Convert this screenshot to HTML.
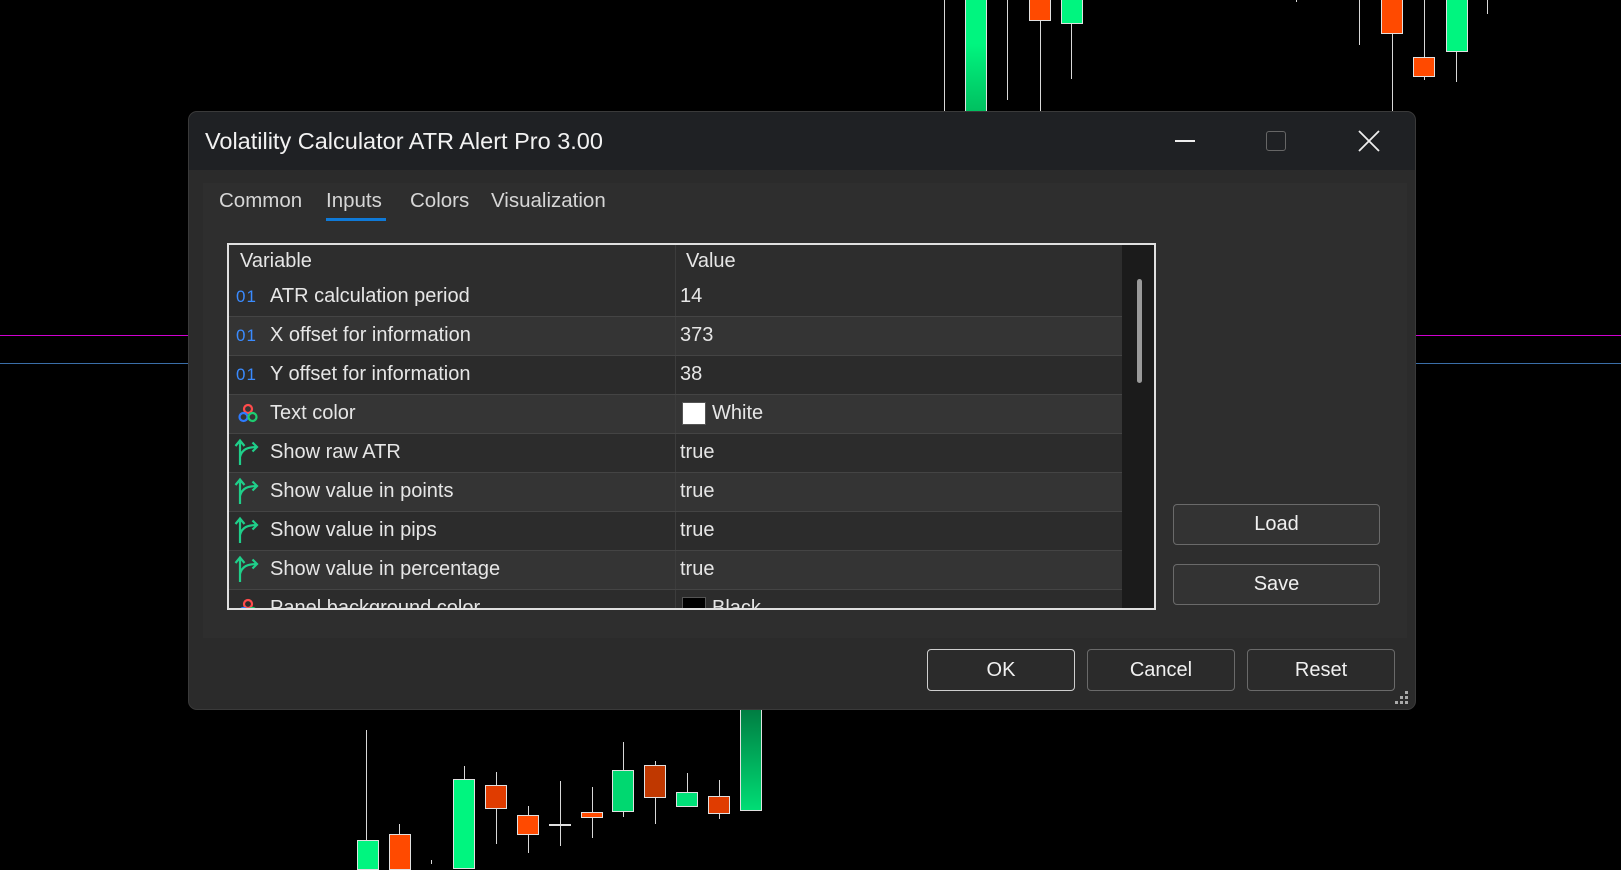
<!DOCTYPE html>
<html><head><meta charset="utf-8"><style>
*{margin:0;padding:0;box-sizing:border-box}
body{width:1621px;height:864px;background:#000;position:relative;overflow:hidden;font-family:"Liberation Sans",sans-serif;color:#e6e6e6}
.a{position:absolute}
.w{position:absolute;width:1px;background:#d8d8d8}
.g{position:absolute;background:#00f57f;border:1px solid #e0e0e0}
.r{position:absolute;background:#ff4a00;border:1px solid #e0e0e0}
.dlg{left:188px;top:111px;width:1228px;height:599px;background:#2b2b2b;border-radius:9px;overflow:hidden;border:1px solid #3a3a3a}
.row{position:absolute;left:0;width:893px;height:39px;border-top:1px solid #444;font-size:20px}
.row .t{position:absolute;left:41px;top:7px;white-space:nowrap}
.row .v{position:absolute;left:451px;top:7px;white-space:nowrap}
.row .d{position:absolute;left:446px;top:0;width:1px;height:100%;background:#3c3c3c}
.ic{position:absolute;left:8px;top:8px}
.num{color:#3a8bff;font-size:17px;top:9px;left:7px;letter-spacing:1px}
.btn{position:absolute;border:1px solid #6a6a6a;border-radius:4px;background:#333;font-size:20px;text-align:center;color:#f0f0f0}
</style></head><body>
<div class="a" style="left:0;top:335px;width:1621px;height:1px;background:#d000d0"></div>
<div class="a" style="left:0;top:363px;width:1621px;height:1px;background:#3a6ea8"></div>
<div class="w" style="left:944px;top:0;height:112px"></div>
<div class="g" style="left:965px;top:-2px;width:22px;height:114px;background:linear-gradient(#00f57f 40%,#00c060)"></div>
<div class="w" style="left:1007px;top:0;height:100px"></div>
<div class="w" style="left:1040px;top:20px;height:92px"></div>
<div class="r" style="left:1029px;top:-2px;width:22px;height:23px"></div>
<div class="w" style="left:1071px;top:22px;height:57px"></div>
<div class="g" style="left:1061px;top:-2px;width:22px;height:26px"></div>
<div class="w" style="left:1296px;top:0;height:2px"></div>
<div class="w" style="left:1359px;top:0;height:45px"></div>
<div class="w" style="left:1392px;top:32px;height:80px"></div>
<div class="r" style="left:1381px;top:-2px;width:22px;height:36px"></div>
<div class="w" style="left:1424px;top:0;height:80px"></div>
<div class="r" style="left:1413px;top:57px;width:22px;height:20px"></div>
<div class="w" style="left:1456px;top:50px;height:32px"></div>
<div class="g" style="left:1446px;top:-2px;width:22px;height:54px"></div>
<div class="w" style="left:1487px;top:0;height:14px"></div>
<div class="w" style="left:366px;top:730px;height:134px"></div>
<div class="g" style="left:357px;top:840px;width:22px;height:30px"></div>
<div class="w" style="left:399px;top:824px;height:40px"></div>
<div class="r" style="left:389px;top:834px;width:22px;height:36px"></div>
<div class="w" style="left:431px;top:860px;height:4px"></div>
<div class="w" style="left:464px;top:766px;height:98px"></div>
<div class="g" style="left:453px;top:779px;width:22px;height:90px"></div>
<div class="w" style="left:496px;top:772px;height:72px"></div>
<div class="r" style="left:485px;top:785px;width:22px;height:24px;background:#e03c00"></div>
<div class="w" style="left:528px;top:806px;height:47px"></div>
<div class="r" style="left:517px;top:815px;width:22px;height:20px"></div>
<div class="w" style="left:560px;top:781px;height:65px"></div>
<div class="a" style="left:549px;top:824px;width:22px;height:2px;background:#e0e0e0"></div>
<div class="w" style="left:592px;top:787px;height:51px"></div>
<div class="r" style="left:581px;top:812px;width:22px;height:6px"></div>
<div class="w" style="left:623px;top:742px;height:75px"></div>
<div class="g" style="left:612px;top:770px;width:22px;height:42px;background:#00d870"></div>
<div class="w" style="left:655px;top:761px;height:63px"></div>
<div class="r" style="left:644px;top:765px;width:22px;height:33px;background:#c03800"></div>
<div class="w" style="left:687px;top:773px;height:20px"></div>
<div class="g" style="left:676px;top:792px;width:22px;height:15px;background:#00e078"></div>
<div class="w" style="left:719px;top:780px;height:39px"></div>
<div class="r" style="left:708px;top:796px;width:22px;height:18px;background:#e03c00"></div>
<div class="g" style="left:740px;top:705px;width:22px;height:106px;background:linear-gradient(#007a40,#00dd75)"></div>

<div class="a dlg">
  <div class="a" style="left:0;top:0;width:100%;height:58px;background:#1f2124"></div>
  <div class="a" style="left:16px;top:16px;font-size:23.5px;color:#f2f2f2;white-space:nowrap">Volatility Calculator ATR Alert Pro 3.00</div>
  <div class="a" style="left:986px;top:28px;width:20px;height:2px;background:#eee"></div>
  <div class="a" style="left:1077px;top:19px;width:20px;height:20px;border:1.5px solid #666;border-radius:3px"></div>
  <svg class="a" style="left:1169px;top:18px" width="22" height="22"><path d="M1 1L21 21M21 1L1 21" stroke="#eee" stroke-width="1.8"/></svg>
  <div class="a" style="left:14px;top:71px;width:1204px;height:455px;background:#2e2e2e"></div>
  <div class="a" style="left:30px;top:77px;font-size:20.5px;color:#d6d6d6">Common</div>
  <div class="a" style="left:137px;top:77px;font-size:20.5px;color:#d6d6d6">Inputs</div>
  <div class="a" style="left:137px;top:106px;width:60px;height:3px;background:#0f7ad8"></div>
  <div class="a" style="left:221px;top:77px;font-size:20.5px;color:#d6d6d6">Colors</div>
  <div class="a" style="left:302px;top:77px;font-size:20.5px;color:#d6d6d6">Visualization</div>

  <div class="a" style="left:38px;top:131px;width:929px;height:367px;border:2px solid #e0e0e0;background:#2c2c2c;overflow:hidden">
    <div class="a" style="left:893px;top:0;width:34px;height:100%;background:#1b1b1b"></div>
    <div class="a" style="left:908px;top:34px;width:5px;height:104px;border-radius:3px;background:#9a9a9a"></div>
    <div class="a" style="left:0;top:0;width:893px;height:33px;background:#2d2d2d;font-size:20px">
      <div class="a" style="left:11px;top:5px">Variable</div>
      <div class="a" style="left:446px;top:0;width:1px;height:33px;background:#3c3c3c"></div>
      <div class="a" style="left:457px;top:5px">Value</div>
    </div>
    <div class="row" style="top:33px;background:#2d2d2d;border-top:none"><span class="ic num">01</span><span class="t">ATR calculation period</span><span class="d"></span><span class="v">14</span></div>
    <div class="row" style="top:71px;background:#343434"><span class="ic num">01</span><span class="t">X offset for information</span><span class="d"></span><span class="v">373</span></div>
    <div class="row" style="top:110px;background:#2b2b2b"><span class="ic num">01</span><span class="t">Y offset for information</span><span class="d"></span><span class="v">38</span></div>
    <div class="row" style="top:149px;background:#353535"><svg class="ic" width="22" height="22"><circle cx="11" cy="6" r="4" fill="none" stroke="#ff4b4b" stroke-width="2.2"/><circle cx="6.5" cy="14" r="4" fill="none" stroke="#2d7bff" stroke-width="2.2"/><circle cx="15.5" cy="14" r="4" fill="none" stroke="#1ecc70" stroke-width="2.2"/></svg><span class="t">Text color</span><span class="d"></span><span class="a" style="left:453px;top:7px;width:24px;height:23px;background:#fff;border:1px solid #555"></span><span class="v" style="left:483px">White</span></div>
    <div class="row" style="top:188px;background:#2c2c2c"><svg class="ic" width="26" height="28" style="left:5px;top:4px"><path d="M6 27V3M1.5 8L6 2.5L10.5 8M6 19C8 11 14 9 23 9M18.5 4.5L23 9L18.5 13.5" fill="none" stroke="#1fcf8a" stroke-width="2.2"/></svg><span class="t">Show raw ATR</span><span class="d"></span><span class="v">true</span></div>
    <div class="row" style="top:227px;background:#343434"><svg class="ic" width="26" height="28" style="left:5px;top:4px"><path d="M6 27V3M1.5 8L6 2.5L10.5 8M6 19C8 11 14 9 23 9M18.5 4.5L23 9L18.5 13.5" fill="none" stroke="#1fcf8a" stroke-width="2.2"/></svg><span class="t">Show value in points</span><span class="d"></span><span class="v">true</span></div>
    <div class="row" style="top:266px;background:#2c2c2c"><svg class="ic" width="26" height="28" style="left:5px;top:4px"><path d="M6 27V3M1.5 8L6 2.5L10.5 8M6 19C8 11 14 9 23 9M18.5 4.5L23 9L18.5 13.5" fill="none" stroke="#1fcf8a" stroke-width="2.2"/></svg><span class="t">Show value in pips</span><span class="d"></span><span class="v">true</span></div>
    <div class="row" style="top:305px;background:#343434"><svg class="ic" width="26" height="28" style="left:5px;top:4px"><path d="M6 27V3M1.5 8L6 2.5L10.5 8M6 19C8 11 14 9 23 9M18.5 4.5L23 9L18.5 13.5" fill="none" stroke="#1fcf8a" stroke-width="2.2"/></svg><span class="t">Show value in percentage</span><span class="d"></span><span class="v">true</span></div>
    <div class="row" style="top:344px;background:#2c2c2c"><svg class="ic" width="22" height="22"><circle cx="11" cy="6" r="4" fill="none" stroke="#ff4b4b" stroke-width="2.2"/><circle cx="6.5" cy="14" r="4" fill="none" stroke="#2d7bff" stroke-width="2.2"/><circle cx="15.5" cy="14" r="4" fill="none" stroke="#1ecc70" stroke-width="2.2"/></svg><span class="t">Panel background color</span><span class="d"></span><span class="a" style="left:453px;top:7px;width:24px;height:23px;background:#000;border:1px solid #555"></span><span class="v" style="left:483px">Black</span></div>
  </div>

  <div class="btn" style="left:984px;top:392px;width:207px;height:41px;line-height:39px">Load</div>
  <div class="btn" style="left:984px;top:452px;width:207px;height:41px;line-height:39px">Save</div>
  <div class="btn" style="left:738px;top:537px;width:148px;height:42px;line-height:40px;border-color:#cfcfcf;background:#2b2b2b">OK</div>
  <div class="btn" style="left:898px;top:537px;width:148px;height:42px;line-height:40px;background:#2b2b2b">Cancel</div>
  <div class="btn" style="left:1058px;top:537px;width:148px;height:42px;line-height:40px;background:#2b2b2b">Reset</div>
  <svg class="a" style="left:1206px;top:579px" width="14" height="14"><g fill="#aaa"><rect x="10" y="0" width="3" height="3"/><rect x="5" y="5" width="3" height="3"/><rect x="10" y="5" width="3" height="3"/><rect x="0" y="10" width="3" height="3"/><rect x="5" y="10" width="3" height="3"/><rect x="10" y="10" width="3" height="3"/></g></svg>
</div>
</body></html>
